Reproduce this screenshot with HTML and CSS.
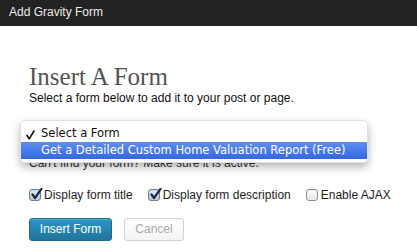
FILE: index.html
```
<!DOCTYPE html>
<html>
<head>
<meta charset="utf-8">
<link rel="stylesheet" href="styles.css">
</head>
<body>
<div class="titlebar">Add Gravity Form</div>
<div class="content">
  <h1 class="heading">Insert A Form</h1>
  <p class="intro">Select a form below to add it to your post or page.</p>
  <div class="picker">
    <div class="select">
      <svg class="arrows" width="8" height="12" viewBox="0 0 8 12"><path d="M1 5 L4 1 L7 5 Z M1 7 L4 11 L7 7 Z" fill="#e4e4e4"/></svg>
    </div>
    <div class="menu">
      <div class="item"><svg class="check" width="9" height="10" viewBox="0 0 9 10"><path d="M1 5.5 L3.2 8.8 L8 1" fill="none" stroke="#111" stroke-width="1.6" stroke-linecap="round" stroke-linejoin="round"/></svg>Select a Form</div>
      <div class="item active">Get a Detailed Custom Home Valuation Report (Free)</div>
    </div>
  </div>
  <p class="help">Can't find your form? Make sure it is active.</p>
  <div class="options">
    <label class="opt"><span class="box checked"><svg width="13" height="13" viewBox="0 0 13 13"><path d="M2.5 6.5 L5 10 L11.5 0.8" fill="none" stroke="#1c2a3e" stroke-width="2.2" stroke-linecap="round" stroke-linejoin="round"/></svg></span>Display form title</label>
    <label class="opt"><span class="box checked"><svg width="13" height="13" viewBox="0 0 13 13"><path d="M2.5 6.5 L5 10 L11.5 0.8" fill="none" stroke="#1c2a3e" stroke-width="2.2" stroke-linecap="round" stroke-linejoin="round"/></svg></span>Display form description</label>
    <label class="opt"><span class="box"></span>Enable AJAX</label>
  </div>
  <div class="actions">
    <button class="btn primary">Insert Form</button>
    <button class="btn secondary">Cancel</button>
  </div>
</div>
</body>
</html>
```
FILE: styles.css
```
* { box-sizing: border-box; }
html, body { margin: 0; padding: 0; background: #fff; }
body { font-family: "Liberation Sans", Arial, sans-serif; font-size: 12px; color: #1e1e1e; }

.titlebar {
  height: 26px;
  line-height: 25px;
  background: #222;
  color: #ececec;
  padding-left: 9px;
  font-size: 12px;
}

.content { padding: 0 29px; }

.heading {
  margin: 37px 0 0;
  font-family: "Liberation Serif", "Times New Roman", serif;
  font-weight: normal;
  font-size: 25px;
  line-height: 28px;
  color: #545454;
}

.intro { margin: 0; line-height: 14px; color: #111; white-space: nowrap; }

.picker { position: relative; margin-top: 18px; }
.select {
  height: 20px;
  margin-right: 10px;
  display: flex;
  justify-content: flex-end;
  align-items: center;
  padding-right: 10px;
}

.menu {
  position: absolute;
  left: -9px;
  top: -3px;
  width: 348px;
  height: 43px;
  padding: 4px 0 4px;
  background: rgba(255,255,255,0.95);
  border: 1px solid rgba(0,0,0,0.12);
  border-radius: 5px;
  box-shadow: 0 4px 9px rgba(0,0,0,0.3);
  font-family: "DejaVu Sans", Verdana, sans-serif;
  font-size: 11.5px;
  color: #111;
}
.item {
  height: 17px;
  line-height: 17px;
  padding-left: 20px;
  position: relative;
  white-space: nowrap;
}
.item .check { position: absolute; left: 5px; top: 5px; }
.item.active {
  background: linear-gradient(#5f8ff0, #3466e4);
  color: #fff;
}

.help { margin: 13px 0 0; line-height: 14px; color: #333; white-space: nowrap; }

.options {
  margin-top: 18px;
  display: flex;
  gap: 15px;
  line-height: 14px;
}
.opt { display: flex; align-items: center; gap: 3px; white-space: nowrap; flex-shrink: 0; }
.box {
  position: relative;
  flex-shrink: 0;
  width: 12px;
  height: 12px;
  border: 1px solid #8a8f96;
  border-radius: 3px;
  background: linear-gradient(#ffffff, #e6e6e6);
  box-shadow: inset 0 1px 1px rgba(0,0,0,0.08);
}
.box.checked {
  border-color: #6a7e97;
  background: linear-gradient(#e3edf8, #b3c9e3);
}
.box svg { position: absolute; left: 0; top: -2px; }

.actions { margin-top: 16px; display: flex; gap: 12px; }
.btn {
  height: 23px;
  padding: 0;
  border-radius: 3px;
  font-family: "Liberation Sans", Arial, sans-serif;
  font-size: 12px;
  line-height: 21px;
  white-space: nowrap;
  text-align: center;
}
.primary {
  width: 83px;
  background: linear-gradient(#2a95c5, #21759b);
  border: 1px solid #1e6a8d;
  color: #fff;
  box-shadow: inset 0 1px 0 rgba(120,200,230,0.5);
}
.secondary {
  width: 60px;
  background: linear-gradient(#fefefe, #f4f4f4);
  border: 1px solid #d2d2d2;
  color: #aaa;
}
```
